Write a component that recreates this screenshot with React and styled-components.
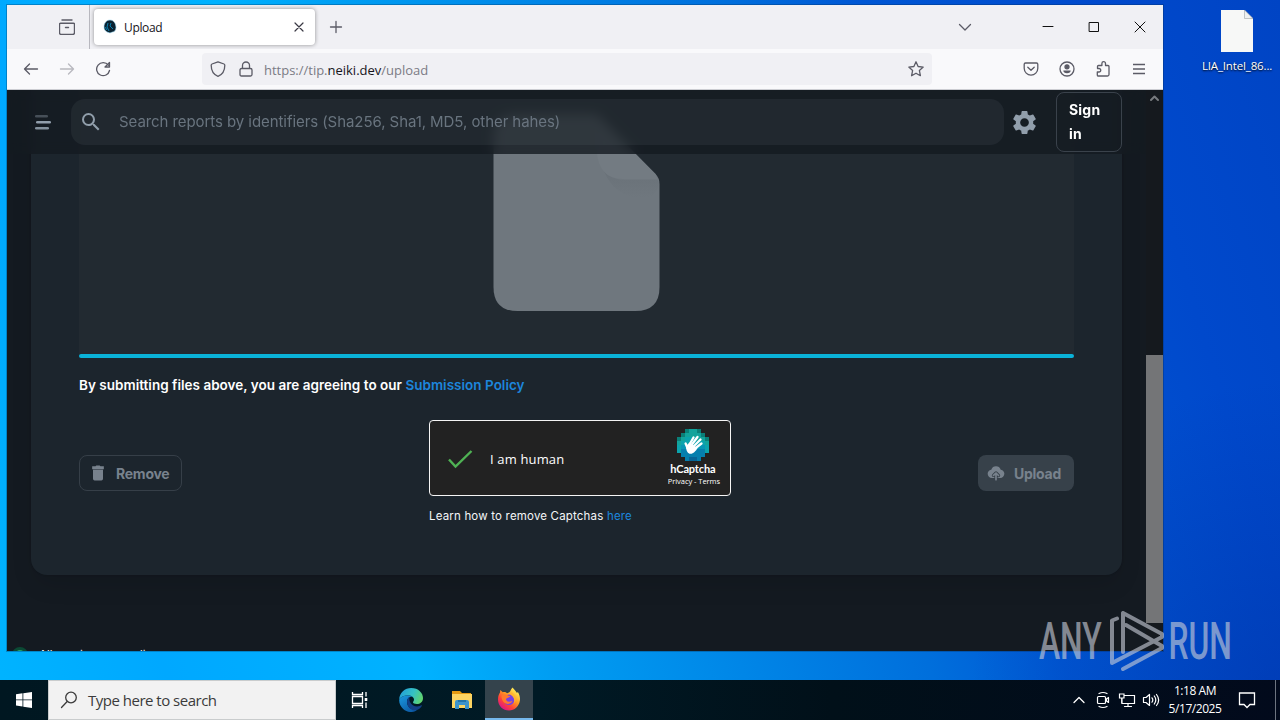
import React from "react";
import styled, { createGlobalStyle } from "styled-components";
import { MdSearch, MdSettings } from "react-icons/md";

const GlobalStyle = createGlobalStyle`
  * {
    box-sizing: border-box;
  }
  body {
    margin: 0;
    overflow: hidden;
    font-family: "Open Sans", "Noto Sans", sans-serif;
  }
  svg {
    display: block;
    flex-shrink: 0;
  }
`;

const Desktop = styled.div`
  position: relative;
  display: flex;
  flex-direction: column;
  width: 1280px;
  height: 720px;
  overflow: hidden;
  background: radial-gradient(circle at 1290px 700px, rgba(0, 40, 150, 0.4), transparent 320px),
    linear-gradient(
      73deg,
      #00b4ff 0%,
      #00a8ff 12%,
      #00b2ff 29%,
      #009df2 38%,
      #006fdc 63%,
      #0057d4 72%,
      #0049cc 88%,
      #0044c4 100%
    );
`;

const Workspace = styled.div`
  display: flex;
  height: 680px;
  padding: 5px 0 0 7px;
`;

const Window = styled.div`
  display: flex;
  flex-direction: column;
  width: 1156px;
  height: 646px;
  flex-shrink: 0;
  box-shadow: 0 0 0 1px rgba(0, 40, 80, 0.3);
`;

// browser chrome

const TabBar = styled.div`
  display: flex;
  align-items: center;
  height: 44px;
  background-color: #f0f0f4;
  color: #5b5b66;
`;

const TabsView = styled.div`
  display: flex;
  align-items: center;
  justify-content: flex-end;
  width: 83px;
  height: 44px;
  padding-right: 14px;
  border-right: 1px solid #b8b8bf;
`;

const Tab = styled.div`
  display: flex;
  align-items: center;
  width: 221px;
  height: 36px;
  margin: 0 13px 0 4px;
  padding: 0 8px 0 9px;
  border-radius: 4px;
  background-color: white;
  box-shadow: 0 0 4px rgba(0, 0, 0, 0.4);
`;

const TabTitle = styled.span`
  flex: 1;
  margin-left: 6px;
  font-size: 12px;
  letter-spacing: -0.35px;
  color: #15141a;
`;

const WindowButtons = styled.div`
  display: flex;
  align-items: center;
  margin-left: auto;
  padding-right: 16px;
  gap: 32px;
  color: #111;
`;

const AllTabs = styled.div`
  margin-right: 36px;
  color: #5b5b66;
`;

const NavBar = styled.div`
  display: flex;
  align-items: center;
  height: 41px;
  padding: 0 16px;
  background-color: #f9f9fb;
  border-bottom: 1px solid #cccdd2;
  color: #5b5b66;
`;

const NavButtons = styled.div`
  display: flex;
  gap: 20px;
  width: 179px;
`;

const UrlBar = styled.div`
  display: flex;
  align-items: center;
  width: 730px;
  height: 32px;
  padding: 0 8px;
  border-radius: 4px;
  background-color: #f0f0f4;
`;

const UrlIcons = styled.div`
  display: flex;
  gap: 12px;
`;

const Url = styled.span`
  flex: 1;
  margin-left: 10px;
  padding-top: 1px;
  font-size: 13px;
  letter-spacing: -0.01px;
  color: #7b7b84;

  b {
    font-weight: 400;
    color: #15141a;
  }
`;

const NavTools = styled.div`
  display: flex;
  margin-left: auto;
  gap: 20px;
`;

// web page

const Page = styled.div`
  display: flex;
  flex: 1;
  min-height: 0;
  background-color: #141a21;
  font-family: Inter, "Liberation Sans", sans-serif;
`;

const Viewport = styled.div`
  position: relative;
  width: 1139px;
  height: 561px;
  overflow: hidden;
`;

const Header = styled.header`
  position: absolute;
  z-index: 2;
  top: 0;
  left: 0;
  right: 0;
  display: flex;
  align-items: center;
  height: 64px;
  padding: 0 24px 0 26px;
  background-color: rgba(20, 26, 33, 0.8);
  backdrop-filter: blur(6px);
`;

const SearchBox = styled.div`
  display: flex;
  align-items: center;
  width: 933px;
  height: 46px;
  margin-left: 18px;
  padding-left: 8px;
  border-radius: 14px;
  background-color: rgba(145, 152, 171, 0.09);
  color: #919eab;
`;

const Placeholder = styled.span`
  margin: -1px 0 0 16px;
  font-size: 15px;
  letter-spacing: -0.07px;
  color: #69747f;
`;

const SettingsButton = styled.div`
  margin-left: 6px;
  color: #919eab;
`;

const SignIn = styled.button`
  width: 66px;
  height: 60px;
  margin-left: auto;
  padding: 0 12px;
  border: 1px solid #3a424b;
  border-radius: 8px;
  background: none;
  font: 700 14px/24px Inter, sans-serif;
  letter-spacing: 0.2px;
  text-align: left;
  color: white;
`;

const Card = styled.main`
  height: 485px;
  margin: 0 24px;
  padding: 0 48px;
  border-radius: 0 0 16px 16px;
  background-color: #1c252d;
  box-shadow: 0 0 2px rgba(0, 0, 0, 0.2), 0 12px 24px -4px rgba(0, 0, 0, 0.12);
`;

const DropZone = styled.div`
  display: flex;
  justify-content: center;
  height: 264px;
  padding-top: 24px;
  background-color: #222a31;
`;

const Progress = styled.div`
  height: 4px;
  border-radius: 2px;
  background-color: #0ab2d8;
`;

const Policy = styled.p`
  margin: 16px 0 0;
  font-size: 13.5px;
  font-weight: 600;
  line-height: 22px;
  letter-spacing: 0.02px;
  color: white;
`;

const Link = styled.span`
  color: #1c86dc;
`;

const Actions = styled.div`
  display: grid;
  grid-template-columns: 350px 1fr auto;
  margin-top: 24px;
`;

const ActionButton = styled.button`
  display: flex;
  align-items: center;
  gap: 8px;
  width: ${(props) => props.$width};
  height: 36px;
  margin-top: 35px;
  padding: 0 0 0 8px;
  border: ${(props) => (props.$filled ? "0" : "1px solid #363f48")};
  border-radius: 8px;
  background-color: ${(props) => (props.$filled ? "#37414a" : "transparent")};
  font: 700 14px Inter, sans-serif;
  letter-spacing: -0.25px;
  color: #78828d;
`;

const Captcha = styled.div`
  display: flex;
  align-items: center;
  width: 302px;
  height: 76px;
  padding: 0 10px 0 15px;
  border: 1px solid #f5f5f5;
  border-radius: 4px;
  background-color: #222;
  color: white;
`;

const CaptchaLabel = styled.span`
  flex: 1;
  margin: 2px 0 0 15px;
  font: 13px "Open Sans", sans-serif;
  letter-spacing: 0.15px;
`;

const CaptchaBrand = styled.div`
  display: flex;
  flex-direction: column;
  align-items: center;
  padding-bottom: 2px;

  svg {
    margin-right: 2px;
  }
`;

const BrandName = styled.span`
  margin: 1px 2px 0 0;
  font: 700 11px/14px Lato, sans-serif;
  letter-spacing: -0.15px;
`;

const BrandLinks = styled.span`
  font: 7.5px/10px "Open Sans", sans-serif;
  letter-spacing: -0.05px;
  white-space: nowrap;
`;

const CaptchaHelp = styled.p`
  margin: 11px 0 0;
  font-size: 11.5px;
  line-height: 18px;
  letter-spacing: 0.18px;
  color: #f4f6f8;
`;

const StatusLine = styled.div`
  display: flex;
  align-items: center;
  gap: 11px;
  margin-top: 71px;
  padding-left: 5px;
  font-size: 11.5px;
  line-height: 18px;
  letter-spacing: 0.05px;
  white-space: nowrap;
  color: white;
`;

const StatusDot = styled.i`
  width: 16px;
  height: 16px;
  border: 3px solid #0b4a35;
  border-radius: 50%;
  background-color: #22a86a;
`;

const Scrollbar = styled.div`
  display: flex;
  flex-direction: column;
  align-items: center;
  justify-content: space-between;
  width: 17px;
  height: 561px;
  padding: 4px 0 28px;
  background-color: #15191e;
  color: #777a7e;
`;

const Thumb = styled.div`
  width: 17px;
  height: 268px;
  background-color: #747577;
`;

// desktop

const Shortcut = styled.div`
  display: flex;
  flex-direction: column;
  align-items: center;
  width: 76px;
  margin: 5px 0 0 36px;
  font-size: 11.5px;
  letter-spacing: -0.15px;
  color: white;
  text-shadow: 0 1px 2px black;
  white-space: nowrap;

  span {
    margin-top: 6px;
  }
`;

const Watermark = styled.svg`
  position: absolute;
  z-index: 5;
  left: 1036px;
  top: 606px;
`;

const Taskbar = styled.footer`
  display: flex;
  align-items: center;
  height: 40px;
  background: linear-gradient(90deg, #001721 0%, #001a25 42%, #011019 65%, #020a1c 100%);
  color: white;
`;

const TaskItem = styled.div`
  display: flex;
  align-items: center;
  justify-content: center;
  width: ${(props) => props.$width || "50px"};
  height: 40px;
  background-color: ${(props) => (props.$active ? "#34434c" : "transparent")};
  border-bottom: ${(props) => (props.$active ? "2px solid #76b9ed" : "0")};
`;

const TaskSearch = styled.div`
  display: flex;
  align-items: center;
  width: 288px;
  height: 40px;
  padding-left: 11px;
  border: 1px solid #c9cccd;
  background-color: #f2f2f2;
  font-size: 15px;
  letter-spacing: -0.5px;
  color: #3b3b3b;

  span {
    margin-left: 10px;
  }
`;

const Tray = styled.div`
  display: flex;
  align-items: center;
  height: 40px;
  margin-left: auto;
`;

const TrayIcons = styled.div`
  display: flex;
  align-items: center;
  gap: 6px;
`;

const Clock = styled.div`
  width: 66px;
  margin: 0 10px 0 2px;
  font-size: 12px;
  line-height: 18px;
  letter-spacing: -0.45px;
  text-align: center;
`;

const ShowDesktop = styled.div`
  width: 5px;
  height: 40px;
  margin-left: 19px;
  border-left: 1px solid #6d7480;
`;

const Icon = ({ size = 16, box = 16, width = 1.3, children, ...rest }) => (
  <svg
    width={size}
    height={size}
    viewBox={`0 0 ${box} ${box}`}
    fill="none"
    stroke="currentColor"
    strokeWidth={width}
    strokeLinecap="round"
    strokeLinejoin="round"
    {...rest}
  >
    {children}
  </svg>
);

// colours of the captcha logo tiles, one row per line, "." is empty
const tiles = ["..abba..", ".abbbba.", "abcccbba", "bccccccb", "cddddddc", "ceeeeeec", ".eeeeee.", "..effe.."];
const tileColors = {
  a: "#0a7f78",
  b: "#12a39b",
  c: "#0ba3ad",
  d: "#0796b4",
  e: "#067fae",
  f: "#086496",
};

const CaptchaLogo = () => (
  <svg width="32" height="32" viewBox="0 0 32 32">
    {tiles.map((row, y) =>
      row.split("").map((t, x) =>
        t === "." ? null : (
          <rect key={`${x}-${y}`} x={x * 4} y={y * 4} width="4" height="4" fill={tileColors[t]} />
        )
      )
    )}
    <g stroke="white" strokeWidth="2.3" strokeLinecap="round" fill="none">
      <path d="M12.5 15.5L16.5 8.5" />
      <path d="M14.5 16L20.5 8" />
      <path d="M16.5 17.5L23.5 10.5" />
      <path d="M18 19.5L24.5 14.5" />
      <path d="M10.5 19L8.6 14.5" />
    </g>
    <path d="M9 17l3.5-3.5 6.5 4.5 1.5 1c-1.5 3-4.5 6-7 5.8-2.500 0-4.500-2.800-4.500-7.800z" fill="white" />
  </svg>
);

const FileArt = () => (
  <svg width="168" height="198" viewBox="0 0 168 198">
    <defs>
      <linearGradient id="fold" x1="0" y1="0" x2="0" y2="1">
        <stop offset="0" stopColor="#656d74" />
        <stop offset="1" stopColor="#6f777e" />
      </linearGradient>
    </defs>
    <path
      d="M24.500 0H102.500L162.500 60Q166.500 64 166.500 70V173Q166.500 197 142.500 197H24.500Q.5 197 .5 173V24Q.5 0 24.500 0Z"
      fill="#6f777e"
    />
    <path d="M104 36Q108 66 132 66H165Q168 72 160 82Q116 92 104 36Z" fill="url(#fold)" />
    <path d="M103.500 0V36Q105.500 65 129.500 65H164.500L162.500 60Z" fill="#737b82" />
  </svg>
);

const EdgeIcon = () => (
  <svg width="24" height="24" viewBox="0 0 24 24">
    <defs>
      <linearGradient id="edgeTop" x1="0" y1="0.3" x2="1" y2="0.6">
        <stop offset="0" stopColor="#229fd9" />
        <stop offset="0.55" stopColor="#35c1c4" />
        <stop offset="1" stopColor="#62d46b" />
      </linearGradient>
      <linearGradient id="edgeLow" x1="0" y1="0" x2="0.7" y2="1">
        <stop offset="0" stopColor="#1b9ae0" />
        <stop offset="1" stopColor="#0c59a4" />
      </linearGradient>
    </defs>
    <path
      d="M0.200 12C0.200 4.500 6 0 12.200 0C19.500 0 24 5 24 10C24 14 21 16 17.800 16C15.500 16 14 15.300 14 14.300C14 13.600 15 13.200 15 11.500C15 9.500 12.800 7.400 9 7.400C4.500 7.400 0.700 9.500 0.200 12Z"
      fill="url(#edgeTop)"
    />
    <path
      d="M0.200 12C0.700 9.500 4.500 7.400 9 7.400C11 7.400 12.500 8 13.500 8.800C10.500 8 8 10.500 8 13.700C8 19 13 23 19 21.300C15 25 8.500 25 4.200 21C1.500 18.500 0 15.500 0.200 12Z"
      fill="url(#edgeLow)"
    />
    <path
      d="M8 13.700C8 11.500 9 9.700 10.500 9C9.500 13 12.500 18.500 18 18.500C20 18.500 21.500 17.700 22.500 17.300C23 17.200 23.100 17.600 22.800 18C19.500 23 15 22.500 13.500 22C10 20.500 8 17.500 8 13.700Z"
      fill="#123f86"
    />
  </svg>
);

const FolderIcon = () => (
  <svg width="22" height="20" viewBox="0 0 22 20">
    <path d="M1 1h8l2 2h9v5H1z" fill="#e59a12" />
    <path d="M1 4h20v14H1z" fill="#fcd462" />
    <path d="M4 19v-7q0-2 2-2h10q2 0 2 2v7h-4v-4H8v4z" fill="#3d94cb" />
    <path d="M7 10h8v2H7z" fill="#2274aa" />
  </svg>
);

const FirefoxIcon = () => (
  <svg width="24" height="24" viewBox="0 0 24 24">
    <defs>
      <linearGradient id="fox" x1="0.85" y1="0.1" x2="0.2" y2="0.95">
        <stop offset="0" stopColor="#fff15a" />
        <stop offset="0.4" stopColor="#ff9a22" />
        <stop offset="0.7" stopColor="#ff4338" />
        <stop offset="1" stopColor="#d9138c" />
      </linearGradient>
    </defs>
    <path
      d="M15.500 0.500C17 2.300 18.500 3.500 19.700 5.800L21 5.300C22.500 7.800 23.300 10.500 22.900 13.500C22 19.500 17.500 23.500 12 23.500C6 23.500 1 19 1 12.500C1 9 2 7 3 5.600L3.300 3L5.800 5.200C8 4.800 9 5.500 10 6.200C11.500 6 12.700 5.200 13.200 4.200C13.700 2.800 14.500 1.500 15.500 0.500Z"
      fill="url(#fox)"
    />
    <circle cx="12" cy="12.700" r="5.300" fill="#7542e5" />
    <path
      d="M4.500 8.500C7 7 9.500 7.500 11.500 8.700L13.500 9C13 10.500 10 10.500 9 12C9 14.500 12 15.500 15.500 13.800C14.500 17 10 18 7 15.500C5 13.800 4.500 11 4.500 8.500Z"
      fill="#ff7a2c"
    />
    <path d="M14 5C18 7 20 12 17.500 16.500C17.800 12 16.500 10 14.500 8.500Z" fill="#ffb62e" />
  </svg>
);

function BrowserChrome() {
  return (
    <>
      <TabBar>
        <TabsView>
          <Icon width={1.4}>
            <path d="M3 1h10M1.500 4.200h13q1 0 1 1v8.300q0 2-2 2h-11q-2 0-2-2V5.200q0-1 1-1zM6.500 8.500h3" />
          </Icon>
        </TabsView>
        <Tab>
          <svg width="15" height="16" viewBox="0 0 15 16">
            <path
              d="M7 1C10.500 1 13 4.500 13 8.500C13 11 11.500 13 9.500 13L7 14L4 13C2 11.500 1 10.500 1 8C1 4 3.500 1 7 1Z"
              fill="#0a2231"
              stroke="#9fdcf5"
              strokeWidth="0.600"
            />
            <path d="M5 4L4 8L6 12M8 4L7 7L10 10M2.500 8l1 3" stroke="#087fb0" fill="none" />
          </svg>
          <TabTitle>Upload</TabTitle>
          <Icon width={1.2} color="#3a3944">
            <path d="M4 4l8 8M12 4l-8 8" />
          </Icon>
        </Tab>
        <Icon>
          <path d="M8 2.500v11M2.500 8h11" />
        </Icon>
        <WindowButtons>
          <AllTabs>
            <Icon>
              <path d="M2.500 5.500L8 11l5.500-5.500" />
            </Icon>
          </AllTabs>
          <Icon size={14} box={14} width={1}>
            <path d="M2 6.500h10" />
          </Icon>
          <Icon size={14} box={14} width={1} strokeLinejoin="miter">
            <path d="M2.500 2.500h9v9h-9z" />
          </Icon>
          <Icon size={14} box={14} width={1}>
            <path d="M2 2l10 10M12 2L2 12" />
          </Icon>
        </WindowButtons>
      </TabBar>
      <NavBar>
        <NavButtons>
          <Icon>
            <path d="M14.500 8H1.500M6.500 3L1.500 8l5 5" />
          </Icon>
          <Icon opacity="0.4">
            <path d="M1.500 8h13M9.500 3l5 5-5 5" />
          </Icon>
          <Icon>
            <path d="M13.300 4.200A6.500 6.500 0 1 0 14.500 9.500M14.500 1.500v4.500H10z" />
          </Icon>
        </NavButtons>
        <UrlBar>
          <UrlIcons>
            <Icon>
              <path d="M8 .8L14 3q.8.300.8 1.200C14.800 9.500 12.500 13.500 8 15.300C3.500 13.500 1.200 9.500 1.200 4.200Q1.200 3.300 2 3z" />
            </Icon>
            <Icon>
              <path d="M3.500 7.500h9q1.500 0 1.500 1.500v4.500q0 1.500-1.500 1.500h-9Q2 15 2 13.500V9q0-1.500 1.500-1.500zM4.500 7.500V4.500a3.500 3.500 0 0 1 7 0v3" />
            </Icon>
          </UrlIcons>
          <Url>
            https://tip.<b>neiki.dev</b>/upload
          </Url>
          <Icon>
            <path d="M8 .8l2.100 4.700 5.100.6-3.800 3.500 1 5.100L8 12.200l-4.400 2.500 1-5.100L.8 6.100l5.100-.6z" />
          </Icon>
        </UrlBar>
        <NavTools>
          <Icon>
            <path d="M2.500 2h11q1.300 0 1.300 1.300v4a6.800 6.800 0 0 1-13.600 0v-4Q1.200 2 2.500 2zM4.800 6.200L8 9.300l3.200-3.100" />
          </Icon>
          <Icon>
            <circle cx="8" cy="8" r="7" />
            <circle cx="8" cy="5.800" r="2" fill="currentColor" />
            <path d="M4.300 9.500h7.400Q11.500 12.300 8 12.300T4.300 9.500z" fill="currentColor" stroke="none" />
          </Icon>
          <Icon>
            <path d="M3 15h9.500q1.500 0 1.500-1.500V5.500q0-1-1-1H10.500V2.500a1.800 1.800 0 0 0-3.600 0v2H3.500q-1 0-1 1v2H4a1.700 1.700 0 0 1 0 3.500H2.300V14q0 1 .7 1z" />
          </Icon>
          <Icon strokeLinecap="butt">
            <path d="M2 3.500h12M2 8h12M2 12.500h12" />
          </Icon>
        </NavTools>
      </NavBar>
    </>
  );
}

function UploadPage() {
  return (
    <Page>
      <Viewport>
        <Header>
          <svg width="20" height="20" viewBox="0 0 20 20" fill="#919eab">
            <rect x="2" y="3" width="13" height="2.600" rx="1.300" opacity="0.4" />
            <rect x="3" y="9" width="15" height="2.600" rx="1.300" />
            <rect x="2" y="15" width="14" height="2.600" rx="1.300" opacity="0.9" />
          </svg>
          <SearchBox>
            <MdSearch size={24} />
            <Placeholder>Search reports by identifiers (Sha256, Sha1, MD5, other hahes)</Placeholder>
          </SearchBox>
          <SettingsButton>
            <MdSettings size={29} />
          </SettingsButton>
          <SignIn>
            Sign
            <br />
            in
          </SignIn>
        </Header>
        <Card>
          <DropZone>
            <FileArt />
          </DropZone>
          <Progress />
          <Policy>
            By submitting files above, you are agreeing to our <Link>Submission Policy</Link>
          </Policy>
          <Actions>
            <ActionButton $width="103px">
              <svg width="20" height="20" viewBox="0 0 24 24" fill="currentColor">
                <path d="M6 8h12v11q0 2-2 2H8q-2 0-2-2zM5 4h4l1-1h4l1 1h4v3.500H5z" />
              </svg>
              Remove
            </ActionButton>
            <div>
              <Captcha>
                <Icon size={30} box={30} width={2.4} color="#4fb254" strokeLinecap="butt" strokeLinejoin="miter">
                  <path d="M4 16.500l6.500 7L26.500 8" />
                </Icon>
                <CaptchaLabel>I am human</CaptchaLabel>
                <CaptchaBrand>
                  <CaptchaLogo />
                  <BrandName>hCaptcha</BrandName>
                  <BrandLinks>Privacy - Terms</BrandLinks>
                </CaptchaBrand>
              </Captcha>
              <CaptchaHelp>
                Learn how to remove Captchas <Link>here</Link>
              </CaptchaHelp>
            </div>
            <ActionButton $width="96px" $filled>
              <svg width="20" height="20" viewBox="0 0 24 24" fill="currentColor">
                <path d="M21.900 12c0-.110-.060-.220-.090-.330a4.170 4.170 0 0 0-.180-.570C20.800 9.400 19.500 8.300 17.670 8A6 6 0 0 0 6.330 8C4.500 8.300 3.200 9.400 2.370 11.100A5.230 5.230 0 0 0 2 13a5 5 0 0 0 5 5h3v-1.370a2 2 0 0 1-1 .27a2.050 2.050 0 0 1-1.440-.61a2 2 0 0 1 .05-2.830l3-2.900A2 2 0 0 1 12 10a2 2 0 0 1 1.410.59l3 3a2 2 0 0 1 0 2.820A2 2 0 0 1 15 17a1.920 1.920 0 0 1-1-.27V18h3a5 5 0 0 0 5-5a5.230 5.230 0 0 0-.1-1z" />
                <path d="M12.710 11.290a1 1 0 0 0-1.400 0l-3 2.900a1 1 0 1 0 1.380 1.440L11 14.360V20a1 1 0 0 0 2 0v-5.590l1.290 1.300a1 1 0 0 0 1.420 0a1 1 0 0 0 0-1.420z" />
              </svg>
              Upload
            </ActionButton>
          </Actions>
        </Card>
        <StatusLine>
          <StatusDot />
          All services are online
        </StatusLine>
      </Viewport>
      <Scrollbar>
        <Icon size={9} box={9} width={2}>
          <path d="M1 6l3.500-3.500L8 6" />
        </Icon>
        <Thumb />
      </Scrollbar>
    </Page>
  );
}

function App() {
  return (
    <Desktop>
      <GlobalStyle />
      <Workspace>
        <Window>
          <BrowserChrome />
          <UploadPage />
        </Window>
        <Shortcut>
          <svg width="32" height="42" viewBox="0 0 32 42">
            <path d="M0 0h23l9 9v33H0z" fill="#f7f8f7" />
            <path d="M23.500 0v8.500H32z" fill="#eef0f0" stroke="#a9adb0" strokeWidth="0.700" />
          </svg>
          <span>LIA_Intel_86...</span>
        </Shortcut>
      </Workspace>
      <Taskbar>
        <TaskItem $width="48px">
          <svg width="16" height="16" viewBox="0 0 16 16" fill="white">
            <path d="M0 2.200l6.500-.9v6.200H0zM7.300 1.200L16 0v7.500H7.300zM0 8.300h6.500v6.200L0 13.600zM7.300 8.300H16V16l-8.700-1.300z" />
          </svg>
        </TaskItem>
        <TaskSearch>
          <Icon size={18} box={18}>
            <circle cx="11" cy="6.500" r="5.300" />
            <path d="M7.200 10.500L1.500 16.500" />
          </Icon>
          <span>Type here to search</span>
        </TaskSearch>
        <TaskItem $width="48px">
          <Icon size={18} box={18} strokeLinecap="butt" strokeLinejoin="miter">
            <path d="M1.500 1v2.500h10V1M1.500 17v-2.500h10V17M1.500 5.500h10v7h-10zM15 1v4.500M15 11.500V17" />
            <path d="M13.700 7h2.600v3h-2.600z" fill="white" stroke="none" />
          </Icon>
        </TaskItem>
        <TaskItem $width="54px">
          <EdgeIcon />
        </TaskItem>
        <TaskItem $width="47px">
          <FolderIcon />
        </TaskItem>
        <TaskItem $width="48px" $active>
          <FirefoxIcon />
        </TaskItem>
        <Tray>
          <TrayIcons>
            <Icon size={18} box={18}>
              <path d="M4 11.500l5-5 5 5" />
            </Icon>
            <Icon size={18} box={18} width={1.2}>
              <path d="M4.500 5.500h6q1 0 1 1v5q0 1-1 1h-6q-1 0-1-1v-5q0-1 1-1zM14.500 6.500v5l-2-1.500V8zM5 2.500q4-2 8 0M5 15.500q4 2 8 0" />
            </Icon>
            <Icon size={18} box={18} width={1.2} strokeLinejoin="miter">
              <path d="M6 4.500h10.500v8H4V7M1.500 3H6v4H1.500zM3.700 7v5M10 12.500v3M6.500 15.500h7" />
            </Icon>
            <Icon size={18} box={18} width={1.2}>
              <path d="M1.500 6.500H4l3.500-3v11L4 11.500H1.500zM10 6.800q1.600 2.200 0 4.400M12.300 5q3 4 0 8M14.500 3.500q4.300 5.500 0 11" />
            </Icon>
          </TrayIcons>
          <Clock>
            1:18 AM
            <br />
            5/17/2025
          </Clock>
          <Icon size={18} box={18} width={1.3} strokeLinejoin="miter">
            <path d="M1.500 2h15v11.500H12l-3 3-3-3H1.500z" />
          </Icon>
          <ShowDesktop />
        </Tray>
      </Taskbar>
      <Watermark width="200" height="70" viewBox="0 0 200 70" fill="#c7ccd8" opacity="0.62">
        <g fontFamily="Roboto, sans-serif" fontSize="51" fontWeight="500">
          <text transform="translate(3 53) scale(0.640 1)" textLength="98" lengthAdjust="spacingAndGlyphs">
            ANY
          </text>
          <text transform="translate(132.500 53) scale(0.640 1)" textLength="99" lengthAdjust="spacingAndGlyphs">
            RUN
          </text>
        </g>
        <g fill="none" stroke="#c7ccd8" strokeWidth="4" strokeLinejoin="round" strokeLinecap="round">
          <path d="M81 12.500L76 14.500V57L126 31V28L87 7V46M90 19L126 40V42L87 63" />
        </g>
      </Watermark>
    </Desktop>
  );
}

export default App;
